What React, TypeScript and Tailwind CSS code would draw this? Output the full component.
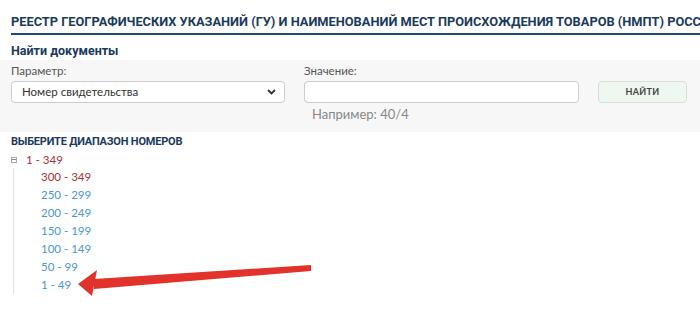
import React from "react";

const ranges = [
  { t: "300 - 349", red: true },
  { t: "250 - 299" },
  { t: "200 - 249" },
  { t: "150 - 199" },
  { t: "100 - 149" },
  { t: "50 - 99" },
  { t: "1 - 49" },
];

const headFont = { fontFamily: "Roboto, 'Open Sans', sans-serif" };

export default function App() {
  return (
    <div className="relative w-[700px] h-[320px] overflow-hidden bg-white" style={{ fontFamily: "Lato, 'Open Sans', sans-serif" }}>
      <div className="pl-[11px] pt-[12px]">
        <div className="whitespace-nowrap text-[12.8px] font-bold text-[#1b3a5c] leading-[20px]" style={headFont}>
          РЕЕСТР ГЕОГРАФИЧЕСКИХ УКАЗАНИЙ (ГУ) И НАИМЕНОВАНИЙ МЕСТ ПРОИСХОЖДЕНИЯ ТОВАРОВ (НМПТ) РОССИЙСКОЙ ФЕДЕРАЦИИ
        </div>
        <div className="mt-[1px] h-[2px] bg-[#1f4a73]" />
        <div className="mt-[7px] text-[12.5px] font-bold text-[#1b3a5c] leading-[18px]" style={headFont}>Найти документы</div>
      </div>
      <div className="bg-[#f7f7f7] pl-[11px] pt-[2px] h-[72px] flex gap-[19px]">
        <div className="w-[274px] flex flex-col">
          <div className="text-[11.5px] text-[#555] leading-[18px]">Параметр:</div>
          <div className="mt-[1px] h-[22px] bg-white border border-[#ccc] rounded-[4px] flex items-center justify-between pl-[10px] pr-[8px] text-[11.5px] text-[#333]">
            <span>Номер свидетельства</span>
            <svg width="9" height="6" viewBox="0 0 9 6"><path d="M1 1l3.5 3.5L8 1" stroke="#333" strokeWidth="1.8" fill="none" /></svg>
          </div>
        </div>
        <div className="w-[275px] flex flex-col">
          <div className="text-[11.5px] text-[#555] leading-[18px]">Значение:</div>
          <div className="mt-[1px] h-[22px] bg-white border border-[#ccc] rounded-[4px]" />
          <div className="mt-[3px] pl-[8px] text-[13px] text-[#888] leading-[16px]">Например: 40/4</div>
        </div>
        <div className="pt-[19px]">
          <div className="w-[89px] h-[22px] bg-[#eef8f1] border border-[#dcdcdc] rounded-[4px] flex items-center justify-center text-[9px] font-bold text-[#444] tracking-[0.3px]">НАЙТИ</div>
        </div>
      </div>
      <div className="pl-[11px] pt-[1px]">
        <div className="text-[11px] tracking-[-0.2px] font-bold text-[#1b3a5c] leading-[18px]" style={headFont}>ВЫБЕРИТЕ ДИАПАЗОН НОМЕРОВ</div>
        <div className="flex items-center h-[17px]">
          <span className="w-[6px] h-[6px] border border-[#aaa] flex items-center justify-center">
            <span className="w-[4px] h-[1px] bg-[#888]" />
          </span>
          <span className="ml-[9px] text-[11.5px] text-[#a8323a]">1 - 349</span>
        </div>
        <div className="ml-[2px] border-l border-[#e2e2e2] pl-[27px] flex flex-col">
          {ranges.map((r) => (
            <div key={r.t} className={`h-[18px] leading-[18px] text-[11.5px] ${r.red ? "text-[#a8323a]" : "text-[#4a97cf]"}`}>{r.t}</div>
          ))}
        </div>
      </div>
      <svg className="absolute left-0 top-0" width="700" height="320" viewBox="0 0 700 320">
        <polygon points="311,265 311,271 94,289 94,279" fill="#e1322b" />
        <polygon points="78,284 97,270 92,296" fill="#e1322b" />
      </svg>
    </div>
  );
}
